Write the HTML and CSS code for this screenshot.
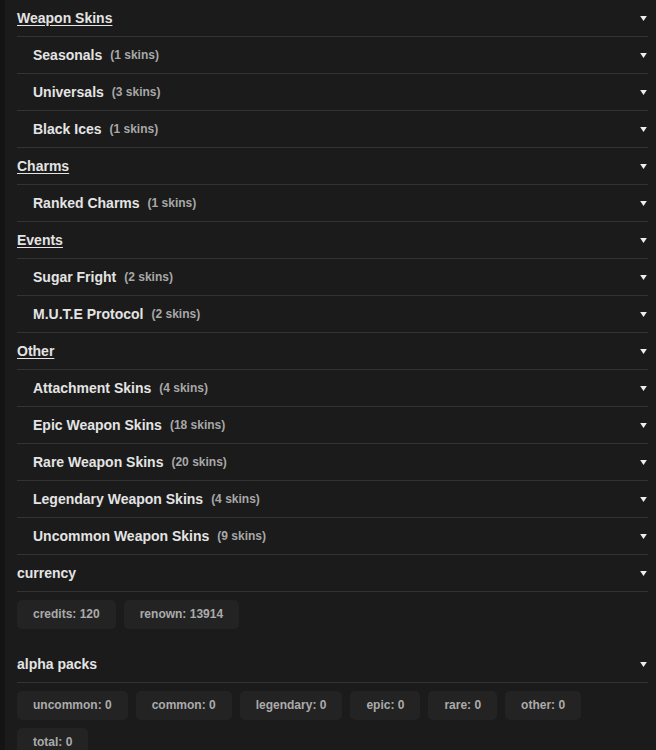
FILE: index.html
```html
<!DOCTYPE html>
<html>
<head>
<meta charset="utf-8">
<link rel="stylesheet" href="styles.css">
</head>
<body>
<div class="panel">
  <div class="row head"><span class="title">Weapon Skins</span><svg class="arrow" viewBox="0 0 8 6"><polygon points="0,0 8,0 4,6"/></svg></div>
  <div class="row sub"><span class="name">Seasonals</span><span class="count">(1 skins)</span><svg class="arrow" viewBox="0 0 8 6"><polygon points="0,0 8,0 4,6"/></svg></div>
  <div class="row sub"><span class="name">Universals</span><span class="count">(3 skins)</span><svg class="arrow" viewBox="0 0 8 6"><polygon points="0,0 8,0 4,6"/></svg></div>
  <div class="row sub"><span class="name">Black Ices</span><span class="count">(1 skins)</span><svg class="arrow" viewBox="0 0 8 6"><polygon points="0,0 8,0 4,6"/></svg></div>
  <div class="row head"><span class="title">Charms</span><svg class="arrow" viewBox="0 0 8 6"><polygon points="0,0 8,0 4,6"/></svg></div>
  <div class="row sub"><span class="name">Ranked Charms</span><span class="count">(1 skins)</span><svg class="arrow" viewBox="0 0 8 6"><polygon points="0,0 8,0 4,6"/></svg></div>
  <div class="row head"><span class="title">Events</span><svg class="arrow" viewBox="0 0 8 6"><polygon points="0,0 8,0 4,6"/></svg></div>
  <div class="row sub"><span class="name">Sugar Fright</span><span class="count">(2 skins)</span><svg class="arrow" viewBox="0 0 8 6"><polygon points="0,0 8,0 4,6"/></svg></div>
  <div class="row sub"><span class="name">M.U.T.E Protocol</span><span class="count">(2 skins)</span><svg class="arrow" viewBox="0 0 8 6"><polygon points="0,0 8,0 4,6"/></svg></div>
  <div class="row head"><span class="title">Other</span><svg class="arrow" viewBox="0 0 8 6"><polygon points="0,0 8,0 4,6"/></svg></div>
  <div class="row sub"><span class="name">Attachment Skins</span><span class="count">(4 skins)</span><svg class="arrow" viewBox="0 0 8 6"><polygon points="0,0 8,0 4,6"/></svg></div>
  <div class="row sub"><span class="name">Epic Weapon Skins</span><span class="count">(18 skins)</span><svg class="arrow" viewBox="0 0 8 6"><polygon points="0,0 8,0 4,6"/></svg></div>
  <div class="row sub"><span class="name">Rare Weapon Skins</span><span class="count">(20 skins)</span><svg class="arrow" viewBox="0 0 8 6"><polygon points="0,0 8,0 4,6"/></svg></div>
  <div class="row sub"><span class="name">Legendary Weapon Skins</span><span class="count">(4 skins)</span><svg class="arrow" viewBox="0 0 8 6"><polygon points="0,0 8,0 4,6"/></svg></div>
  <div class="row sub"><span class="name">Uncommon Weapon Skins</span><span class="count">(9 skins)</span><svg class="arrow" viewBox="0 0 8 6"><polygon points="0,0 8,0 4,6"/></svg></div>
  <div class="row head"><span class="plain">currency</span><svg class="arrow" viewBox="0 0 8 6"><polygon points="0,0 8,0 4,6"/></svg></div>
  <div class="chips">
    <span class="chip">credits: 120</span>
    <span class="chip">renown: 13914</span>
  </div>
  <div class="row head"><span class="plain">alpha packs</span><svg class="arrow" viewBox="0 0 8 6"><polygon points="0,0 8,0 4,6"/></svg></div>
  <div class="chips">
    <span class="chip">uncommon: 0</span>
    <span class="chip">common: 0</span>
    <span class="chip">legendary: 0</span>
    <span class="chip">epic: 0</span>
    <span class="chip">rare: 0</span>
    <span class="chip">other: 0</span>
    <span class="chip">total: 0</span>
  </div>
</div>
</body>
</html>
```
FILE: styles.css
```css
html, body {
  margin: 0;
  padding: 0;
  background: #141414;
  font-family: "Liberation Sans", Arial, sans-serif;
}
.panel {
  margin-left: 5px;
  background: #1b1b1b;
  padding: 0 8px 0 12px;
  min-height: 100vh;
  box-sizing: border-box;
}
.row {
  display: flex;
  align-items: center;
  height: 36px;
  border-bottom: 1px solid #333333;
}
.sub {
  padding-left: 16px;
}
.title, .plain, .name {
  font-size: 14px;
  font-weight: bold;
  color: #e4e4e4;
}
.title {
  text-decoration: underline;
  text-underline-offset: 2px;
}
.count {
  font-size: 12px;
  font-weight: bold;
  color: #a8a8a8;
  margin-left: 8px;
}
.arrow {
  width: 7px;
  height: 5px;
  margin-left: auto;
  margin-right: 1px;
  fill: #eeeeee;
}
.chips {
  display: flex;
  flex-wrap: wrap;
  gap: 8px 8px;
  padding: 8px 0 17px;
}
.chip {
  height: 29px;
  line-height: 29px;
  padding: 0 16px;
  border-radius: 5px;
  background: #232323;
  color: #ababab;
  font-size: 12px;
  font-weight: bold;
}
```
